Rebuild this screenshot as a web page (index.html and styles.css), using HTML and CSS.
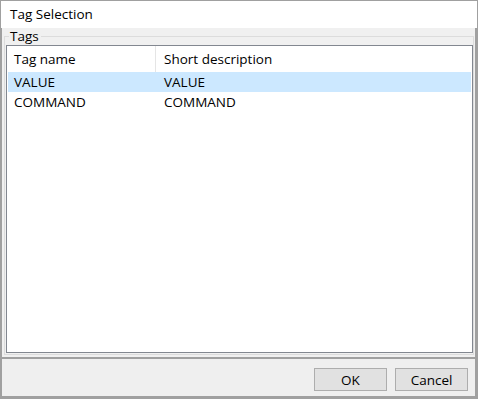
FILE: index.html
```html
<!DOCTYPE html>
<html lang="en">
<head>
    <meta charset="UTF-8">
    <title>Tag Selection</title>
    <link rel="stylesheet" href="styles.css">
</head>
<body>
    <div class="dialog">
        <div class="titlebar">Tag Selection</div>

        <div class="content">
            <fieldset class="group">
                <legend>Tags</legend>
                <div class="listbox">
                    <div class="row header">
                        <div class="cell name">Tag name</div>
                        <div class="cell desc">Short description</div>
                    </div>
                    <div class="row selected">
                        <div class="cell name">VALUE</div>
                        <div class="cell desc">VALUE</div>
                    </div>
                    <div class="row">
                        <div class="cell name">COMMAND</div>
                        <div class="cell desc">COMMAND</div>
                    </div>
                </div>
            </fieldset>
        </div>

        <div class="footer">
            <button class="btn">OK</button>
            <button class="btn">Cancel</button>
        </div>
    </div>
</body>
</html>
```

FILE: styles.css
```css
/* General */
body {
    margin: 0;
    font-family: "Open Sans", "Noto Sans", sans-serif;
    font-size: 13.5px;
    color: #000000;
    background: #ffffff;
}

.dialog {
    width: 478px;
    height: 399px;
    display: flex;
    flex-direction: column;
    box-sizing: border-box;
}

/* Title bar */
.titlebar {
    height: 28px;
    box-sizing: border-box;
    border: 1px solid #a0a0a0;
    border-bottom: none;
    background: #ffffff;
    padding: 4px 0 0 9px;
    line-height: 18px;
}

/* Group box area */
.content {
    flex: 1;
    display: flex;
    background: #f0f0f0;
    border-left: 2px solid #a0a0a0;
    border-right: 3px solid #a0a0a0;
    padding: 0 1px 2px 2px;
}

.group {
    flex: 1;
    display: flex;
    flex-direction: column;
    margin: 0;
    padding: 0 0 1px 1px;
    border: 1px solid #dcdcdc;
    min-width: 0;
}

.group legend {
    margin-left: 3px;
    padding: 0 2px 0 1px;
    line-height: 16px;
}

/* List view */
.listbox {
    flex: 1;
    margin: 1px 0 0 0;
    background: #ffffff;
    border: 1px solid #828790;
    box-shadow: inset 0 0 0 1px #ffffff;
}

.row {
    display: flex;
    height: 20px;
    line-height: 20px;
    margin: 0 1px;
}

.row.header {
    height: 26px;
    line-height: 26px;
}

.row.selected {
    background: #cce8ff;
}

.cell {
    white-space: nowrap;
    box-sizing: border-box;
}

.cell.name {
    width: 148px;
    padding-left: 6px;
}

.cell.desc {
    flex: 1;
    padding-left: 8px;
}

.header .cell.name {
    border-right: 1px solid #e5e5e5;
}

/* Buttons */
.footer {
    height: 42px;
    box-sizing: border-box;
    display: flex;
    justify-content: flex-end;
    align-items: flex-start;
    gap: 8px;
    padding: 9px 7px 0 0;
    background: #efefef;
    border-top: 2px solid #a0a0a0;
    border-left: 2px solid #a0a0a0;
    border-right: 3px solid #a0a0a0;
    border-bottom: 3px solid #a0a0a0;
}

.btn {
    width: 73px;
    height: 23px;
    padding: 0;
    font-family: inherit;
    font-size: 13.5px;
    background: #e1e1e1;
    border: 1px solid #adadad;
    border-radius: 0;
    color: #000000;
}
```
